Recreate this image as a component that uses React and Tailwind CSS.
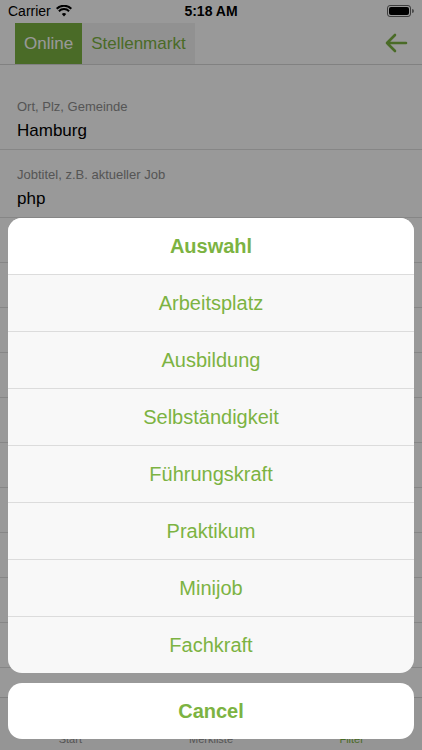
import React from 'react'

const GREEN = 'text-[#7cb342]'
const options = ['Arbeitsplatz', 'Ausbildung', 'Selbständigkeit', 'Führungskraft', 'Praktikum', 'Minijob', 'Fachkraft']

function StatusBar() {
  return (
    <div className="h-[22px] flex items-center justify-between px-[8px] text-black">
      <div className="flex items-center gap-[5px] w-[120px]">
        <span className="text-[14px] leading-none">Carrier</span>
        <svg width="16" height="12" viewBox="0 0 16 12">
          <path d="M8 11.5l2.2-2.4a3.2 3.2 0 0 0-4.4 0z" fill="#000" />
          <path d="M3.6 6.9a6.3 6.3 0 0 1 8.8 0l1.4-1.5a8.4 8.4 0 0 0-11.6 0z" fill="#000" />
          <path d="M1.4 4.5a9.4 9.4 0 0 1 13.2 0L16 3a11.5 11.5 0 0 0-16 0z" fill="#000" />
        </svg>
      </div>
      <span className="text-[14px] font-bold leading-none">5:18 AM</span>
      <div className="w-[120px] flex justify-end">
        <div className="flex items-center">
          <div className="w-[24px] h-[12px] rounded-[3px] border border-black/60 p-[1px]">
            <div className="w-full h-full bg-black rounded-[2px]" />
          </div>
          <div className="w-[1.5px] h-[4px] bg-black/50 ml-[1px] rounded-r" />
        </div>
      </div>
    </div>
  )
}

function Field({ label, value }) {
  return (
    <div className="border-b border-[#e0e0e0] px-[17px] pt-[17px] h-[68px]">
      <div className="text-[13px] text-[#8e8e8e] leading-[16px]">{label}</div>
      <div className="text-[17px] text-black leading-[22px] mt-[5px]">{value}</div>
    </div>
  )
}

export default function App() {
  return (
    <div className="relative w-[422px] h-[750px] overflow-hidden bg-white" style={{ fontFamily: '"Liberation Sans", Arial, sans-serif' }}>
      <StatusBar />

      {/* nav */}
      <div className="h-[43px] flex items-center justify-between border-b border-[#d8d8d8] pl-[15px] pr-[14px]">
        <div className="flex h-[41px] self-start mt-[1px]">
          <div className="bg-[#7cb342] text-white text-[17px] px-[9px] flex items-center">Online</div>
          <div className="bg-[#f2f2f2] text-[#7cb342] text-[17px] pl-[9px] pr-[9px] flex items-center">Stellenmarkt</div>
        </div>
        <svg width="24" height="22" viewBox="0 0 24 22" fill="none" stroke="#7cb342" strokeWidth="2.6" strokeLinecap="round" strokeLinejoin="round">
          <path d="M22 11H3M11 3l-8 8 8 8" />
        </svg>
      </div>

      <div className="h-[17px]" />
      <Field label="Ort, Plz, Gemeinde" value="Hamburg" />
      <Field label="Jobtitel, z.B. aktueller Job" value="php" />
      {[0, 1, 2, 3, 4, 5, 6, 7, 8, 9].map((i) => (
        <div key={i} className="h-[45px] border-b border-[#e0e0e0]" />
      ))}

      {/* tab bar */}
      <div className="absolute left-0 right-0 bottom-0 h-[53px] border-t border-[#d8d8d8] bg-[#f8f8f8] flex items-end pb-[3px]">
        <div className="flex-1 text-center text-[11px] text-[#8e8e8e]">Start</div>
        <div className="flex-1 text-center text-[11px] text-[#8e8e8e]">Merkliste</div>
        <div className="flex-1 text-center text-[11px] text-[#7cb342]">Filter</div>
      </div>

      {/* overlay + action sheet */}
      <div className="absolute inset-0 bg-black/40" />
      <div className="absolute left-[8px] right-[8px] top-[218px] flex flex-col gap-[10px]">
        <div className="rounded-[14px] overflow-hidden bg-[#f8f8f8]">
          <div className={`h-[56px] bg-white flex items-center justify-center text-[20px] font-bold ${GREEN}`}>Auswahl</div>
          {options.map((o) => (
            <div key={o} className={`h-[57px] border-t border-[#dcdcdc] flex items-center justify-center text-[20px] ${GREEN}`}>{o}</div>
          ))}
        </div>
        <div className={`h-[56px] rounded-[14px] bg-white flex items-center justify-center text-[20px] font-bold ${GREEN}`}>Cancel</div>
      </div>
    </div>
  )
}
